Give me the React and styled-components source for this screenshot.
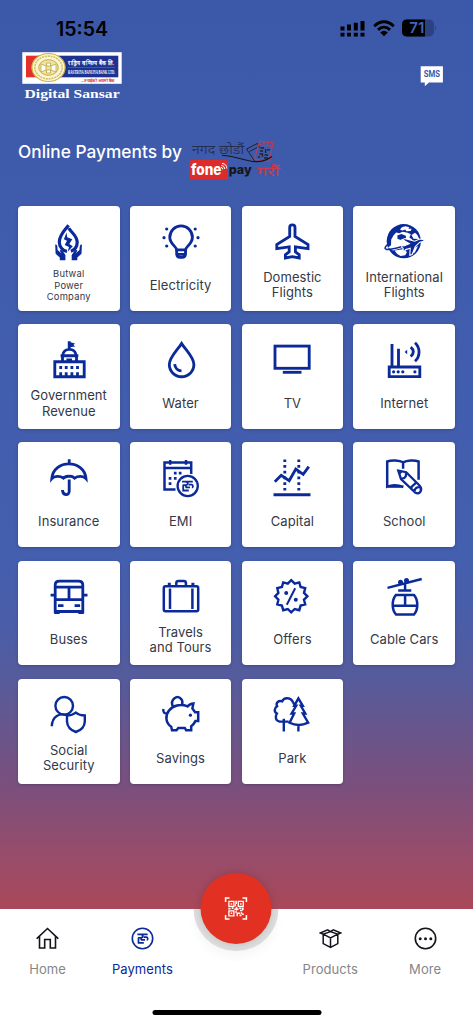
import React from "react";
import styled, { createGlobalStyle } from "styled-components";

const GlobalStyle = createGlobalStyle`
  * {
    box-sizing: border-box;
  }

  body {
    margin: 0;
    font-family: Inter, "Liberation Sans", sans-serif;
  }
`;

const RupeeSign = () => (
  <g strokeWidth="1.8">
    <path d="M-5.4-4.4H5.4M-2.2-4.4C1.4-4.2 1-.8-1.8-.8H-4.8M-4.2-.8V4.5H1.4" />
    <path d="M1.2-1.4H4.2C6-1.2 5.8 1.6 4.4 1.4M-1.8 1.4H2.6M-1.4-.6V1.6" />
  </g>
);

const icons = {
  power: (
    <>
      <path
        strokeWidth="3.2"
        d="M18.6 2.2C15.3 6.4 9.3 12 9.3 19c0 5 3.3 8.8 7.6 9.4M18.9 5.2C20.5 9 27.4 12.4 27.2 19.4c-.1 4.4-2.8 7.6-6.3 8.8"
      />
      <path
        className="fill"
        d="M16.5 9.5L13.9 16.2L17 17.7L14.7 22.1L19 24L17.6 28.8L22.8 23.2L19.3 20.9L22.3 16.2L17.2 14.2Z"
      />
      <path
        className="fill"
        d="M5.2 21.6C7.2 21.4 7.5 23 7.6 27L11.6 30.5L9.7 27.7C10.5 26.4 12 26.8 13 28.4L15.4 32V37.3H9.8V34.4L5.6 30.8ZM31.9 21.6C29.9 21.4 29.6 23 29.5 27L25.5 30.5L27.4 27.7C26.6 26.4 25.1 26.8 24.1 28.4L21.7 32V37.3H27.3V34.4L31.5 30.8Z"
      />
    </>
  ),
  bulb: (
    <>
      <path d="M14.6 26.8C14.6 23.6 7.8 21 7.8 14.2a11.3 11.3 0 0 1 22.6 0C30.4 21 23.6 23.6 23.6 26.8Z" />
      <path d="M14.7 27V31.2Q15 34.4 17.8 34.4H20.4Q23.2 34.4 23.5 31.2V27M15 31.4H23.2" />
      <g className="fill">
        <circle cx="4.7" cy="6" r="1.6" />
        <circle cx="2" cy="14.7" r="1.6" />
        <circle cx="4.7" cy="23" r="1.6" />
        <circle cx="33.2" cy="6" r="1.6" />
        <circle cx="36" cy="14.7" r="1.6" />
        <circle cx="33.2" cy="23" r="1.6" />
      </g>
    </>
  ),
  plane: (
    <path d="M16.7 13.5V4.6C16.7.9 22 .9 22 4.6V13.5L35 21.5V25.6L22.4 23.8V28.8L26.2 31.8V35L19.3 33.6L12.4 35V31.8L16.2 28.8V23.8L3.8 25.6V21.5Z" />
  ),
  globe: (
    <>
      <circle className="fill" cx="18.8" cy="18.2" r="17.1" />
      <g className="paper">
        <path d="M16.8 4.2L20.4 3.3L24.3 4.2L23.4 5.8L26.5 5.8L25.8 8L21.3 8.2L20.3 6.6L17.6 7.6L15 6.8Z" />
        <path d="M8.6 12.3L11.2 9.5L14.2 10.2L17.6 8.8L22.8 9.7L25.8 11.2L24.3 14.4L27.3 16.6L24 22.2L16.5 25.2L8 27.4L3 24.4L6 22.2L6.2 16.5Z" />
        <path d="M9.5 27.6L18 26.2L22 29L20.2 32.2L15.6 33L12.2 31ZM27.5 26L33 23L29.8 29.6L26.8 31ZM30 9.8L32.2 11.8L34.3 16L28.5 15.8L26.5 12Z" />
      </g>
      <path className="fill" d="M12.3 12.6L16.3 11.1L20.8 12.7L21 15.3L17.2 17.2L12.6 15.9Z" />
      <path
        className="fill"
        stroke="#fff"
        d="M40 18.1L34.8 19.2L30.3 23.5L27.2 31.5L24.8 32.2L25.2 25.3L20.7 26.6L18.6 29.4L18 25.2L15.2 23.2L19.4 22.6L24.4 20.7L17.2 16.6L20.3 15.6L29.7 18.2L34.7 16Q38.2 16 40 18.1Z"
      />
      <path strokeWidth="1.5" d="M2.3 21.7C-2.4 26.4-.6 28.4 16.2 23.8" />
    </>
  ),
  government: (
    <>
      <path d="M4.8 20.7H34.2V35.7H4.8ZM19.2.3V8.2M12.8 14.5C13 6.4 25.8 6.4 26 14.5M10.6 14.7H28.3M12.5 15V20.6M26.5 15V20.6" />
      <path
        className="fill"
        d="M19.5 1L25 2.5L23.4 3.9L25.3 5.4L19.5 6.2ZM16.4 20V17.6H22V20ZM9.3 25.1h2.8v2.8H9.3zM14.8 25.1h2.8v2.8h-2.8zM20.5 25.1h2.8v2.8h-2.8zM26.1 25.1h2.8v2.8h-2.8zM9.3 31.3h2.8v4H9.3zM14.8 31.3h2.8v4h-2.8zM20.5 31.3h2.8v4h-2.8zM26.1 31.3h2.8v4h-2.8z"
      />
    </>
  ),
  water: (
    <>
      <path d="M19.6 2.5C16.4 8 7.3 16.1 7.3 23.6a12.3 12.1 0 0 0 24.6 0C31.9 16.1 22.8 8 19.6 2.5Z" />
      <path d="M12.7 23.2C13 27.2 15.8 29.7 19.5 29.8" />
    </>
  ),
  tv: (
    <>
      <rect x="2" y="5.1" width="34.2" height="22.2" />
      <path d="M9.8 31.3H28.5" />
    </>
  ),
  router: (
    <>
      <path d="M4.2 26H34.8V35.6H4.2ZM7 3V25M13.5 7.7V25M25.7 6.2C29.2 9 29.2 12.6 25.7 15.5M30 1.7C35.4 6.6 35.4 15.3 30 20.2" />
      <path className="fill" d="M19.6 11L22.2 8.8V13.2Z" />
      <g className="fill">
        <circle cx="8.6" cy="30.8" r="1.6" />
        <circle cx="13.2" cy="30.8" r="1.6" />
        <circle cx="17.8" cy="30.8" r="1.6" />
        <circle cx="29.9" cy="30.8" r="1.6" />
      </g>
    </>
  ),
  umbrella: (
    <path d="M19.2.3V4M1.8 19.6C3.3 0 34.4 0 36 19.6C33.5 16.7 28 16.7 24.6 19.1Q21.9 16.8 19.2 17.4Q16.3 16.8 13.4 19.1C10 16.7 4.3 16.7 1.8 19.6ZM19.2 20.5V32.2C19.2 37 12.5 36.7 12.5 31" />
  ),
  emi: (
    <>
      <path
        strokeWidth="2.5"
        d="M29.2 15V3.5H2.5V30.6H13.5M2.5 9H29.2M8.2.9V5.8M24 .9V5.8"
      />
      <path
        className="fill"
        d="M11.9 12.7h2.7v2.7h-2.7zM16.8 12.7h2.7v2.7h-2.7zM6.7 18h2.7v2.7H6.7zM11.9 18h2.7v2.7h-2.7zM6.7 23.3h2.7V26H6.7z"
      />
      <circle cx="25.7" cy="27" r="10.1" strokeWidth="2.3" />
      <g transform="translate(25.4 27)">
        <RupeeSign />
      </g>
    </>
  ),
  capital: (
    <>
      <path d="M1.8 22.7L8.2 16.3L16.2 21.7L22.8 10L30.2 15.3L35.8 7.7M.5 35.7H37.5" />
      <path strokeDasharray="2.7 3" d="M11.8.4V32M25.8.4V32" />
    </>
  ),
  school: (
    <>
      <path
        strokeWidth="2.5"
        d="M18.1 9.8V3.3C14.4 1.1 6.5.8 2.2 2.5V27.7C7 25.8 12.8 25.8 18.3 28M18.1 3.3C22 1.1 29.3.8 33.6 2.5V20.8M2.2 27.6H18.4"
      />
      <path className="fill" d="M3 26.9Q10.8 24.2 17.6 28.2H3Z" />
      <path
        strokeWidth="2.3"
        d="M13.3 11.7L21.2 13.2L34.5 26.5Q37.2 29.2 35.6 32.4Q33.7 35.6 30 33.4L16 20.1ZM15.9 19.5Q19.3 20.2 20.8 17.3Q21 15.5 21.1 13.6M26.2 29.6C26.2 25.6 29.8 26.5 30.9 23.4M29.7 32.4C29.2 29.2 32.4 27.9 34.8 28.3"
      />
      <path className="fill" d="M12.4 10.8L18 12.2L14.4 16.2Z" />
    </>
  ),
  bus: (
    <path
      strokeWidth="2.8"
      d="M5.2 33.5V7.2Q5.2 3.2 9.4 3.2H28.6Q32.8 3.2 32.8 7.2V33.5ZM5.2 9.2H32.8M5.2 21.7H32.8M19 9.2V21.7M.6 17.2H5M33 17.2H37.5M8 27.7H13.5M24.6 27.7H30.1M4.2 34.7H9.7M28.3 34.7H33.8"
    />
  ),
  suitcase: (
    <path
      strokeWidth="2.5"
      d="M3.5 8.2H34.5Q36.2 8.2 36.2 10V31.6Q36.2 33.3 34.5 33.3H3.5Q1.8 33.3 1.8 31.6V10Q1.8 8.2 3.5 8.2ZM8 10.5V31M30.4 10.5V31M14.3 7.6V5Q14.3 2.9 16.4 2.9H21.8Q23.9 2.9 23.9 5V7.6M5.8 6H8.8M29.4 6H32.4"
    />
  ),
  offers: (
    <>
      <path
        strokeWidth="2.4"
        d="M18.2 2.2L21.7 5.6L26.3 4.4L27.6 9L32.2 10.2L31 14.9L34.4 18.3L31 21.7L32.2 26.4L27.6 27.6L26.3 32.2L21.7 31L18.2 34.4L14.8 31L10.2 32.2L8.9 27.6L4.3 26.4L5.4 21.7L2.1 18.3L5.4 14.9L4.3 10.2L8.9 9L10.2 4.4L14.8 5.6Z"
      />
      <path strokeWidth="2" d="M13.8 26.8L22.2 10.2" />
      <circle className="fill" cx="13.2" cy="14.9" r="2" />
      <circle className="fill" cx="22.8" cy="21.8" r="2" />
    </>
  ),
  cable: (
    <>
      <path
        strokeWidth="2.5"
        d="M2.5 9.9L36.7 1M20.1 4.5V12.2M13.2 12.4H26.3M11 16.9H28.9C33.4 22 33.4 31.7 29 36.5H11C6.6 31.7 6.6 22 11 16.9ZM7.4 27.7H32.4M20.1 17V27.5"
      />
      <circle className="fill" cx="15.5" cy="4.3" r="2.5" />
      <circle className="fill" cx="21.5" cy="2.4" r="2.5" />
    </>
  ),
  security: (
    <>
      <circle cx="14.2" cy="9.8" r="8.8" strokeWidth="2.4" />
      <path
        strokeWidth="2.4"
        d="M1.8 30.3C2.2 20.2 9.8 16.9 16.4 19.1M25.8 16.6C23 18.9 20 19.4 17 19.4V25.5Q17.4 33 25.8 36Q34.6 33 34.8 25.5V19.4C31.5 19.4 28.5 18.9 25.8 16.6Z"
      />
    </>
  ),
  savings: (
    <>
      <path
        strokeWidth="2.5"
        d="M10.8 10.5C7.8 3 15-.8 18.3 2.2Q21.3 4.5 20 8.4M1.4 13Q.6 17.8 5.2 17.4M9.2 30.8C3.6 27 2.9 19.6 7.1 14.4C10.7 9.6 18.3 7.4 25.6 10.4C27.5 8 29.3 7.5 31.4 7.4L30.4 12.4L33.1 16.2H36.2V25.1H33.4Q31.7 28.6 29.2 30.2V34.3H24.2L22.8 31.9H16.3L14.5 34.3H10Z"
      />
      <circle className="fill" cx="28.4" cy="19.2" r="1.6" />
    </>
  ),
  park: (
    <path
      strokeWidth="2.4"
      d="M20 6.4C18.2 1.3 11 .9 9.2 5.3C5.2 4.2 2.5 7 4.1 10.2C1 12 1 16 3.9 17.5C1.8 21 2.6 24.6 6.6 25.6H15.6M20 6.4L21.6 8.8M10.8 22.8V35.6M25.4 2.4L21.2 9.8H23.2L18.6 17.5H21.2L16.6 26.7Q25.6 31.3 35.2 26.7L29.8 17.5H32.3L27.8 9.8H29.8ZM25.4 29V35.6"
    />
  ),
};

const services = [
  { label: "Butwal\nPower\nCompany", icon: "power", small: true },
  { label: "Electricity", icon: "bulb" },
  { label: "Domestic\nFlights", icon: "plane" },
  { label: "International\nFlights", icon: "globe" },
  { label: "Government\nRevenue", icon: "government" },
  { label: "Water", icon: "water" },
  { label: "TV", icon: "tv" },
  { label: "Internet", icon: "router" },
  { label: "Insurance", icon: "umbrella" },
  { label: "EMI", icon: "emi" },
  { label: "Capital", icon: "capital" },
  { label: "School", icon: "school" },
  { label: "Buses", icon: "bus" },
  { label: "Travels\nand Tours", icon: "suitcase" },
  { label: "Offers", icon: "offers" },
  { label: "Cable Cars", icon: "cable" },
  { label: "Social\nSecurity", icon: "security" },
  { label: "Savings", icon: "savings" },
  { label: "Park", icon: "park" },
];

const PhoneStatus = () => (
  <StatusBar>
    <Clock>15:54</Clock>
    <StatusIcons>
      <svg width="25" height="17" viewBox="0 0 25 17">
        <path d="M.5 6.6h4v3.9h-4zM7 4.4h4v6.1H7zM13.8 2.7h4v7.8h-4zM20.5 1h4v9.5h-4zM.5 12.7h4v3.8h-4zM7 12.7h4v3.8H7zM13.8 12.7h4v3.8h-4zM20.5 12.7h4v3.8h-4z" />
      </svg>
      <svg width="22" height="17" viewBox="0 0 22 17">
        <g fill="none" stroke="#000" strokeWidth="3">
          <path d="M1.3 6.2C7 .4 15 .4 20.7 6.2M5 9.8C8.6 6.4 13.4 6.4 17 9.8" />
        </g>
        <path d="M11 16.2L7.2 12.4Q11 9.2 14.8 12.4Z" />
      </svg>
      <svg width="36" height="18" viewBox="0 0 36 18">
        <rect x="0" y=".6" width="32" height="16.8" rx="5" fill="#2b4180" />
        <path d="M5 .6H23V17.4H5Q0 17.4 0 12.4V5.6Q0 .6 5 .6Z" />
        <path d="M33.2 6.2Q35.4 9 33.2 11.8Z" fill="#2b4180" />
        <BatteryText x="7.3" y="14.2">
          71
        </BatteryText>
      </svg>
    </StatusIcons>
  </StatusBar>
);

const BankLogo = () => (
  <svg width="101" height="50" viewBox="0 0 101 50">
    <rect x=".3" y=".2" width="99.4" height="31.6" fill="#fff" />
    <rect x="4" y="3.7" width="20" height="21.6" fill="#e3302b" />
    <rect x="16" y="3.7" width="80.3" height="21.6" fill="#20328f" />
    <ellipse cx="26.5" cy="15.5" rx="16.6" ry="14" fill="#fbf5d4" stroke="#cdb545" strokeWidth="1.2" />
    <ellipse cx="26.5" cy="15.5" rx="13.7" ry="11.4" fill="none" stroke="#d6c46c" strokeWidth="1.6" strokeDasharray="2.2 .7" />
    <ellipse cx="26.5" cy="15.5" rx="9.8" ry="7.8" fill="#efe4a4" stroke="#c6ad3b" strokeWidth="1" />
    <path
      d="M19 12L24 14V18L19 20ZM34 12L29 14V18L34 20ZM24.5 11H28.5V14H24.5ZM24.5 18H28.5V21H24.5Z"
      fill="#fff"
      stroke="#bca53c"
      strokeWidth=".8"
    />
    <LogoText x="46" y="13.4" size="6.2" textLength="46" lengthAdjust="spacingAndGlyphs">
      राष्ट्रिय वाणिज्य बैंक लि.
    </LogoText>
    <path d="M46 15.5H93" stroke="#cf3b4e" strokeWidth=".7" />
    <LogoText
      transform="translate(46 21.5) scale(.54 1)"
      size="5.8"
      textLength="87"
      lengthAdjust="spacingAndGlyphs"
    >
      RASTRIYA BANIJYA BANK LTD.
    </LogoText>
    <LogoText x="59" y="30.3" size="3.9" color="#d5303a" textLength="33.6" lengthAdjust="spacingAndGlyphs">
      ...तपाईको आफ्नो बैंक
    </LogoText>
    <LogoText x="2.6" y="45.5" size="13.4" textLength="95" lengthAdjust="spacingAndGlyphs">
      Digital Sansar
    </LogoText>
  </svg>
);

const SmsIcon = () => (
  <svg width="23" height="21" viewBox="0 0 23 21">
    <path d="M.7.3H22.9V16.5H9L4.8 20.2V16.5H.7Z" fill="#fff" />
    <SmsText x="3.7" y="11.4" textLength="16.3" lengthAdjust="spacingAndGlyphs">
      SMS
    </SmsText>
  </svg>
);

const FonepayLogo = () => (
  <svg width="93" height="42" viewBox="0 0 93 42">
    <Nepali x="3" y="15" size="13" color="#20263c" textLength="52" lengthAdjust="spacingAndGlyphs">
      नगद छोडौं
    </Nepali>
    <g fill="none" strokeWidth="1">
      <path d="M57.5 10L68.5 4.4L70.5 9M57.5 10L66 22.5M60.5 12.5L68 8.5" stroke="#20232d" />
      <path d="M70.5 2L83.8 3.8L80.6 22.6L65.5 20.5ZM70 5.5L83 7.4" stroke="#c83a4c" />
      <path d="M75 2.5V5M79 3V5.5" stroke="#c83a4c" strokeWidth="1.5" />
      <path
        d="M71.5 9H75M76.6 10V14M78 10.8H81M71 12H74M70.5 15H73.5V18M75.5 16H79M75 19H79M69 18H71"
        stroke="#20232d"
        strokeWidth="1.3"
      />
      <path d="M33 16.5C45 16 54 22 67 22.7Q76 22.8 83 17.5" stroke="#14161c" strokeWidth="1.2" />
    </g>
    <rect x=".7" y="21" width="38.3" height="19.4" rx="2" fill="#dc2b2b" />
    <BrandText x="2" y="36.2" size="15" color="#fff" textLength="30.5" lengthAdjust="spacingAndGlyphs">
      fone
    </BrandText>
    <g fill="none" stroke="#fff" strokeWidth="1">
      <path d="M32 28.4Q33.7 28.5 33.8 30.3M32.4 26.4Q35.7 26.7 35.8 30M33 24.4Q37.7 24.8 37.8 29.5" />
    </g>
    <BrandText x="39.7" y="34.5" size="12.4" color="#14161c" textLength="23" lengthAdjust="spacingAndGlyphs">
      pay
    </BrandText>
    <Nepali
      x="68"
      y="37"
      size="13"
      color="#ce3a49"
      stroke="#ce3a49"
      strokeWidth=".3"
      textLength="22.5"
      lengthAdjust="spacingAndGlyphs"
    >
      गरौं
    </Nepali>
  </svg>
);

const QrIcon = () => (
  <svg width="23" height="23" viewBox="0 0 23 23" fill="#fff">
    <path
      d="M1 5V1H5M18 1H22V5M22 18V22H18M5 22H1V18"
      fill="none"
      stroke="#fff"
      strokeWidth="1.7"
    />
    <path
      d="M4.4 4.4H9.4V9.4H4.4ZM13.8 4.4H18.8V9.4H13.8ZM4.4 13.8H9.4V18.8H4.4Z"
      fill="none"
      stroke="#fff"
      strokeWidth="1.3"
    />
    <path d="M6.2 6.2h1.5v1.5H6.2zM15.6 6.2h1.5v1.5h-1.5zM6.2 15.6h1.5v1.5H6.2zM10.8 3.8H12.4V7H10.8zM10.3 7.2h1.3v2h-1.3zM3.8 10.8H6V12.4H3.8zM7.2 10.3H9V12H7.2zM9.8 11.6H14V13H9.8zM11.2 10H12.8V13.5H11.2zM14.6 10.5H17V12H14.6zM17.5 10.5H19.2V13H17.5zM15.5 12.8H18V14.3H15.5zM10.7 14.3H12.5V15.8H10.7zM12.4 15.5H15.6V17H12.4zM12 16H13.4V19.3H12zM16.2 15.3H17.8V17H16.2zM17.6 16.5H19.3V18H17.6zM15 17.6H17V19.3H15z" />
  </svg>
);

const navIcons = {
  home: (
    <path strokeLinecap="square" d="M1.3 11.2L11.5 1.5L21.7 11.2M3.5 9.6V21H8.7V12.5H14.3V21H19.5V9.6" />
  ),
  payments: (
    <>
      <circle cx="11.5" cy="11.5" r="10.2" />
      <g transform="translate(11.5 11.5) scale(.95)">
        <RupeeSign />
      </g>
    </>
  ),
  products: (
    <path
      strokeWidth="1.5"
      d="M4.2 7.6V16.6L11.5 20.4L18.8 16.6V7.6M11.5 11V20.4M4.2 7.2L11.5 10.8L18.8 7.2M1.3 6L8.7 2.8L11.5 4.6L4.2 7.2ZM21.7 6L14.3 2.8L11.5 4.6L18.8 7.2Z"
    />
  ),
  more: (
    <>
      <circle cx="11.5" cy="11.5" r="10.2" />
      <g fill="currentColor" stroke="none">
        <circle cx="6.2" cy="11.7" r="1.5" />
        <circle cx="11.5" cy="11.7" r="1.5" />
        <circle cx="16.8" cy="11.7" r="1.5" />
      </g>
    </>
  ),
};

const NavItem = ({ name, label, active }) => (
  <NavButton $active={active}>
    <svg width="23" height="23" viewBox="0 0 23 23">
      {navIcons[name]}
    </svg>
    <span>{label}</span>
  </NavButton>
);

function App() {
  return (
    <Screen>
      <GlobalStyle />
      <PhoneStatus />
      <Header>
        <BankLogo />
        <SmsIcon />
      </Header>
      <Heading>
        <Title>Online Payments by</Title>
        <FonepayLogo />
      </Heading>
      <Grid>
        {services.map((item) => (
          <Card key={item.label}>
            <ServiceIcon viewBox="0 0 38 38">{icons[item.icon]}</ServiceIcon>
            <Label $small={item.small}>{item.label}</Label>
          </Card>
        ))}
      </Grid>
      <BottomNav>
        <NavItem name="home" label="Home" />
        <NavItem name="payments" label="Payments" active />
        <ScanSlot>
          <Notch />
          <ScanButton>
            <QrIcon />
          </ScanButton>
        </ScanSlot>
        <NavItem name="products" label="Products" />
        <NavItem name="more" label="More" />
        <HomeIndicator />
      </BottomNav>
    </Screen>
  );
}

const Screen = styled.div`
  display: flex;
  flex-direction: column;
  width: 473px;
  height: 1024px;
  overflow: hidden;
  background: linear-gradient(
    #3b58a9 0,
    #3f5bac 200px,
    #445fae 560px,
    #4b5da6 630px,
    #565b9b 680px,
    #68568c 730px,
    #7c4f7c 790px,
    #994c69 860px,
    #aa4859 909px
  );
`;

const StatusBar = styled.div`
  display: flex;
  justify-content: space-between;
  align-items: flex-start;
  height: 52px;
  padding: 19px 35px 0 56px;
`;

const Clock = styled.div`
  font-size: 19.5px;
  font-weight: 600;
  line-height: 20px;
  color: #000;
`;

const StatusIcons = styled.div`
  display: flex;
  align-items: center;
  gap: 7.5px;
`;

const BatteryText = styled.text`
  font-size: 15px;
  font-weight: 600;
  fill: #4564b8;
`;

const Header = styled.header`
  display: flex;
  justify-content: space-between;
  align-items: flex-start;
  height: 87px;
  padding: 0 30px 0 22px;

  svg:last-child {
    margin-top: 14px;
  }
`;

const LogoText = styled.text`
  font-family: "Liberation Serif", serif;
  font-size: ${(props) => props.size}px;
  font-weight: 700;
  fill: ${(props) => props.color || "#fff"};
`;

const SmsText = styled.text`
  font-family: Roboto, sans-serif;
  font-size: 9px;
  font-weight: 700;
  fill: #3b58a9;
`;

const Heading = styled.div`
  display: flex;
  align-items: flex-start;
  height: 66.8px;
  padding-left: 18px;
  gap: 6px;
`;

const Title = styled.h1`
  width: 165px;
  margin: 0.5px 0 0;
  font-size: 17.3px;
  font-weight: 550;
  line-height: 24px;
  white-space: nowrap;
  color: #fff;
`;

const Nepali = styled.text`
  font-family: "Noto Sans Devanagari", "Noto Sans", sans-serif;
  font-size: ${(props) => props.size}px;
  font-weight: 300;
  fill: ${(props) => props.color};
`;

const BrandText = styled.text`
  font-family: Inter, sans-serif;
  font-size: ${(props) => props.size}px;
  font-weight: 800;
  fill: ${(props) => props.color};
`;

const Grid = styled.main`
  display: grid;
  grid-template-columns: repeat(4, 1fr);
  grid-auto-rows: 104.9px;
  gap: 13.35px 10.3px;
  padding: 0 18px;
`;

const Card = styled.div`
  display: flex;
  flex-direction: column;
  align-items: center;
  padding-top: 17px;
  border-radius: 4px;
  background: #fff;
  box-shadow: 0 1px 3px rgba(20, 30, 80, 0.3);
`;

const ServiceIcon = styled.svg`
  flex: none;
  width: 38px;
  height: 38px;
  overflow: visible;
  fill: none;
  stroke: #0b2a9a;
  stroke-width: 2.85;

  .fill {
    fill: #0b2a9a;
    stroke-width: 0;
  }

  .fill[stroke] {
    stroke: #fff;
    stroke-width: 1.1;
  }

  .paper {
    fill: #fff;
    stroke: none;
  }
`;

const Label = styled.div`
  display: flex;
  align-items: center;
  height: 49px;
  font-size: ${(props) => (props.$small ? "9.4px" : "13px")};
  line-height: ${(props) => (props.$small ? "11.4px" : "15.4px")};
  letter-spacing: ${(props) => (props.$small ? "0.22px" : "0.08px")};
  text-align: center;
  white-space: pre;
  color: #353847;
`;

const BottomNav = styled.nav`
  position: relative;
  display: grid;
  grid-template-columns: 95.2px 94.4px 93.6px 94.2px 95.6px;
  height: 115.3px;
  margin-top: auto;
  background: #fff;
`;

const NavButton = styled.div`
  display: flex;
  flex-direction: column;
  align-items: center;
  gap: 11px;
  padding-top: 18.5px;
  font-size: 13px;
  line-height: 17px;
  letter-spacing: 0.08px;
  color: ${(props) => (props.$active ? "#0b2a9a" : "#868686")};

  svg {
    flex: none;
    color: ${(props) => (props.$active ? "#0b2a9a" : "#14151c")};
    fill: none;
    stroke: currentColor;
    stroke-width: 1.6;
  }
`;

const ScanSlot = styled.div`
  position: relative;
`;

/* grey half ring that hangs below the top edge of the bar */
const Notch = styled.div`
  position: absolute;
  top: 0;
  left: 50%;
  width: 85px;
  height: 42.5px;
  border-radius: 0 0 43px 43px;
  background: #dedede;
  box-shadow: 0 7px 8px rgba(0, 0, 0, 0.03);
  transform: translateX(-50%);
`;

const ScanButton = styled.div`
  position: absolute;
  top: -35.5px;
  left: 50%;
  display: flex;
  align-items: center;
  justify-content: center;
  width: 71px;
  height: 71px;
  border-radius: 50%;
  background: #e23122;
  box-shadow: 0 0 8px rgba(0, 0, 0, 0.16);
  transform: translateX(-50%);
`;

const HomeIndicator = styled.div`
  position: absolute;
  bottom: 9px;
  left: 50%;
  width: 169px;
  height: 5.5px;
  border-radius: 3px;
  background: #000;
  transform: translateX(-50%);
`;

export default App;
